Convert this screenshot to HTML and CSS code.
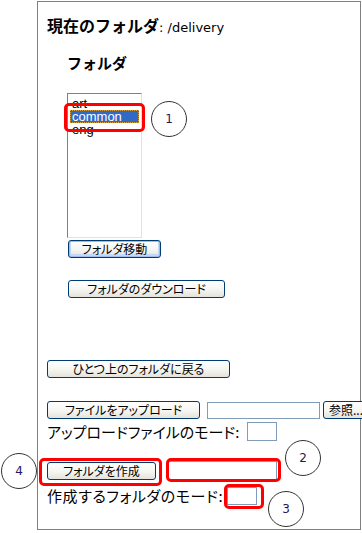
FILE: index.html
```html
<!DOCTYPE html>
<html>
<head>
  <meta charset="UTF-8">
  <title>フォルダ</title>
  <link rel="stylesheet" href="styles.css">
</head>
<body>
  <div class="frame">
    <h1 class="title">現在のフォルダ<span class="path">: /delivery</span></h1>

    <h2 class="folder-head">フォルダ</h2>

    <div class="listbox">
      <div class="item">art</div>
      <div class="item selected">common</div>
      <div class="item">eng</div>
    </div>

    <button class="btn btn-move default">フォルダ移動</button>
    <button class="btn btn-dl">フォルダのダウンロード</button>

    <button class="btn btn-up">ひとつ上のフォルダに戻る</button>

    <div class="row row-upload">
      <button class="btn btn-upload">ファイルをアップロード</button>
      <input type="text" class="field field-file">
      <button class="btn btn-browse">参照...</button>
    </div>
    <div class="row row-mode">
      <span class="label">アップロードファイルのモード:</span>
      <input type="text" class="field field-mode">
    </div>

    <div class="row row-create">
      <button class="btn btn-create">フォルダを作成</button>
      <input type="text" class="field field-name">
    </div>
    <div class="row row-mode2">
      <span class="label label-wide">作成するフォルダのモード:</span>
      <input type="text" class="field field-mode">
    </div>
  </div>

  <!-- annotations -->
  <div class="mark mark-1"></div>
  <div class="mark mark-2"></div>
  <div class="mark mark-3"></div>
  <div class="mark mark-4"></div>
  <div class="num num-1">1</div>
  <div class="num num-2">2</div>
  <div class="num num-3">3</div>
  <div class="num num-4">4</div>
</body>
</html>
```

FILE: styles.css
```css
html, body { margin: 0; overflow: hidden; background: #fff; }
body { font-family: "Noto Sans CJK JP", sans-serif; color: #000; position: relative; width: 362px; height: 533px; }

.frame { box-sizing: border-box; margin: 1px 0 0 37px; width: 324px; height: 529px; border: 1px solid #808080; padding-left: 9px; }

.title { margin: 14px 0 0; height: 18px; line-height: 18px; font-size: 16px; font-weight: bold; white-space: nowrap; }
.title .path { font-family: "DejaVu Sans", sans-serif; font-weight: normal; font-size: 13px; }
.folder-head { margin: 20px 0 0 20px; height: 18px; line-height: 18px; font-size: 15px; font-weight: bold; }

.listbox { box-sizing: border-box; margin: 21px 0 0 20px; width: 75px; height: 145px; padding: 3px 2px 0; background: #fff;
  border: 1px solid #808080; border-right-color: #e4e2d8; border-bottom-color: #e4e2d8; font-family: "Liberation Sans", sans-serif; font-size: 13px; }
.item { height: 13px; line-height: 13px; padding-left: 2px; white-space: nowrap; }
.item.selected { background: #316ac5; color: #fff; outline: 1px dotted #d8a040; outline-offset: -1px; }

.btn { display: block; flex: none; box-sizing: border-box; height: 18px; padding: 0; font-family: "Noto Sans CJK JP", sans-serif; font-size: 12px; line-height: 14px;
  font-feature-settings: "palt"; color: #000; border: 1px solid #003c74; border-radius: 3px;
  background: linear-gradient(#ffffff, #f5f5f1 55%, #e4e2da); }
.btn.default { box-shadow: inset 0 0 0 1px #9cbcf0, inset 0 -1px 0 2px #c4d8f8; }
.btn-move { margin: 2px 0 0 21px; width: 93px; }
.btn-dl { margin: 22px 0 0 21px; width: 157px; }
.btn-up { margin: 62px 0 0 0; width: 183px; }

.row { display: flex; align-items: center; }
.row-upload { margin-top: 23px; height: 18px; gap: 7px; }
.btn-upload { width: 153px; }
.btn-browse { width: 46px; margin-left: -4px; }
.row-mode { margin-top: 3px; height: 19px; gap: 8px; }
.row-create { margin-top: 20px; height: 19px; gap: 11px; }
.btn-create { width: 109px; }
.row-mode2 { margin-top: 7px; height: 18px; gap: 4px; }

.label { font-size: 15px; line-height: 18px; font-feature-settings: "palt"; white-space: nowrap; }
.label-wide { letter-spacing: 0.6px; }

.field { box-sizing: border-box; margin: 0; padding: 0 2px; border: 1px solid #7f9db9; background: #fff; flex: none; }
.field-file { width: 113px; height: 17px; }
.field-mode { width: 30px; height: 19px; }
.row-mode2 .field-mode { height: 18px; }
.field-name { width: 110px; height: 19px; }

.mark { position: absolute; box-sizing: border-box; border: 3px solid #ff0000; border-radius: 5px; }
.mark-1 { left: 64px; top: 103px; width: 81px; height: 29px; }
.mark-2 { left: 166px; top: 458px; width: 115px; height: 24px; }
.mark-3 { left: 224px; top: 484px; width: 40px; height: 25px; }
.mark-4 { left: 39px; top: 458px; width: 123px; height: 28px; }

.num { position: absolute; box-sizing: border-box; width: 36px; height: 36px; border: 1px solid #333; border-radius: 50%;
  display: flex; align-items: center; justify-content: center; font-family: "DejaVu Sans", sans-serif; font-size: 12px; color: #241660; }
.num-1 { left: 151px; top: 101px; }
.num-2 { left: 285px; top: 440px; }
.num-3 { left: 268px; top: 491px; }
.num-4 { left: 1px; top: 453px; }
```
